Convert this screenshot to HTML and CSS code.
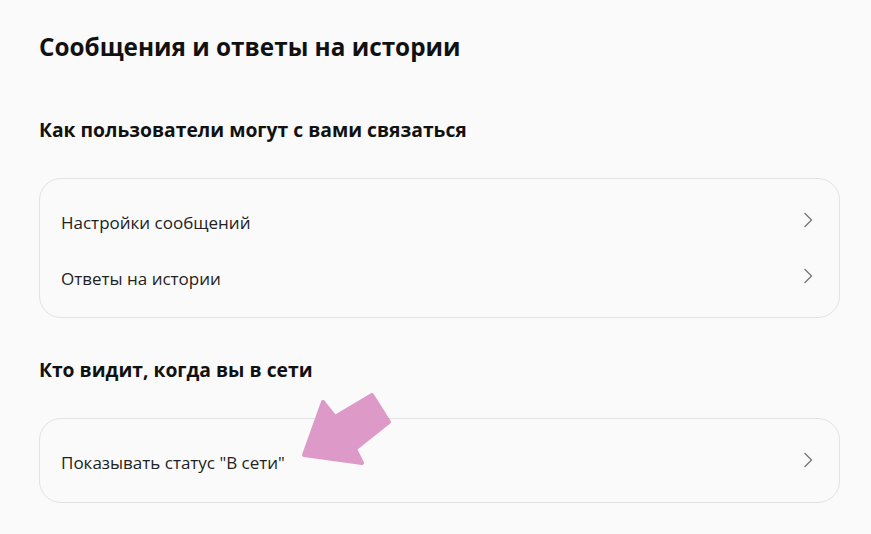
FILE: index.html
```html
<!DOCTYPE html>
<html lang="ru">
<head>
    <meta charset="UTF-8">
    <meta name="viewport" content="width=device-width, initial-scale=1.0">
    <title>Сообщения и ответы на истории</title>
    <link rel="stylesheet" href="styles.css">
</head>
<body>
    <div class="page">
        <h1 class="page-title">Сообщения и ответы на истории</h1>

        <h2 class="section-title">Как пользователи могут с вами связаться</h2>
        <div class="card">
            <a class="row" href="#">
                <span>Настройки сообщений</span>
                <svg class="chevron" viewBox="0 0 10 16"><path d="M1.5 1 L8.5 8 L1.5 15"/></svg>
            </a>
            <a class="row" href="#">
                <span>Ответы на истории</span>
                <svg class="chevron" viewBox="0 0 10 16"><path d="M1.5 1 L8.5 8 L1.5 15"/></svg>
            </a>
        </div>

        <h2 class="section-title">Кто видит, когда вы в сети</h2>
        <div class="card card-single">
            <a class="row" href="#">
                <span>Показывать статус "В сети"</span>
                <svg class="chevron" viewBox="0 0 10 16"><path d="M1.5 1 L8.5 8 L1.5 15"/></svg>
            </a>
        </div>

        <svg class="pointer" viewBox="0 0 100 80">
            <polygon points="23,12 35,27 72,5 89,32 55,59 62,73 4,65"/>
        </svg>
    </div>
</body>
</html>
```

FILE: styles.css
```css
* {
    margin: 0;
    padding: 0;
    box-sizing: border-box;
}
body {
    font-family: "Open Sans", "Noto Sans", sans-serif;
    background-color: #fafafa;
    color: #111;
}
.page {
    position: relative;
    padding: 30px 32px 0 39px;
    width: 871px;
}
.page-title {
    font-size: 24.3px;
    font-weight: 700;
    line-height: 34px;
    margin-bottom: 53px;
}
.section-title {
    font-size: 19.3px;
    font-weight: 700;
    line-height: 26px;
    margin-bottom: 35px;
}
.card {
    width: 801px;
    border: 1px solid #e2e2e2;
    border-radius: 22px;
    padding: 15px 0 11px;
    margin-bottom: 39px;
}
.card-single {
    padding: 15px 0 12px;
}
.row {
    display: flex;
    justify-content: space-between;
    align-items: center;
    height: 56px;
    padding: 0 26px 0 21px;
    color: #222;
    text-decoration: none;
    font-size: 17px;
}
.chevron {
    width: 10px;
    height: 16px;
    margin-top: -4px;
    fill: none;
    stroke: #6f7479;
    stroke-width: 1.3;
}
.pointer {
    position: absolute;
    left: 300px;
    top: 390px;
    width: 100px;
    height: 80px;
}
.pointer polygon {
    fill: #dd99c7;
    stroke: #dd99c7;
    stroke-width: 4;
    stroke-linejoin: round;
}
```
